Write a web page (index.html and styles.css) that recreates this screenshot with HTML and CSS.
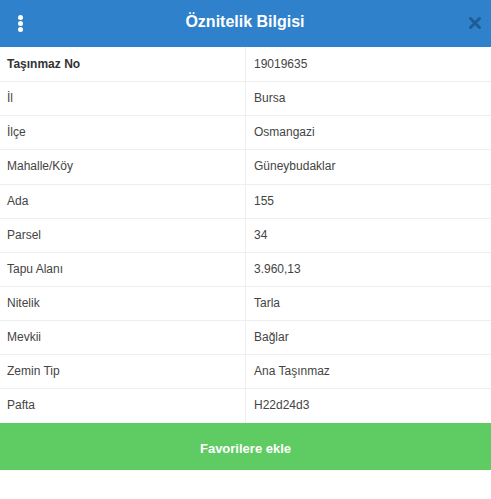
FILE: index.html
```html
<!DOCTYPE html>
<html lang="tr">
<head>
<meta charset="utf-8">
<title>Öznitelik Bilgisi</title>
<link rel="stylesheet" href="styles.css">
</head>
<body>
<div class="panel">
  <header class="panel-header">
    <span class="menu-icon"><i></i><i></i><i></i></span>
    <h1 class="panel-title">Öznitelik Bilgisi</h1>
    <svg class="close-icon" width="14" height="14" viewBox="0 0 14 14"><path d="M2.5 2.5 L11.5 11.5 M11.5 2.5 L2.5 11.5" stroke="#1f5c94" stroke-width="3" stroke-linecap="round"/></svg>
  </header>
  <table class="attr-table">
    <tbody>
      <tr><th>Taşınmaz No</th><td>19019635</td></tr>
      <tr><td>İl</td><td>Bursa</td></tr>
      <tr><td>İlçe</td><td>Osmangazi</td></tr>
      <tr><td>Mahalle/Köy</td><td>Güneybudaklar</td></tr>
      <tr><td>Ada</td><td>155</td></tr>
      <tr><td>Parsel</td><td>34</td></tr>
      <tr><td>Tapu Alanı</td><td>3.960,13</td></tr>
      <tr><td>Nitelik</td><td>Tarla</td></tr>
      <tr><td>Mevkii</td><td>Bağlar</td></tr>
      <tr><td>Zemin Tip</td><td>Ana Taşınmaz</td></tr>
      <tr><td>Pafta</td><td>H22d24d3</td></tr>
    </tbody>
  </table>
  <button class="fav-button">Favorilere ekle</button>
</div>
</body>
</html>
```
FILE: styles.css
```css
* { box-sizing: border-box; }
html, body { margin: 0; padding: 0; background: #fff; }
body { font-family: "Liberation Sans", Arial, sans-serif; color: #333; }

.panel { width: 491px; }

.panel-header {
  height: 47px;
  background: #3081cb;
  display: flex;
  align-items: center;
  justify-content: space-between;
  padding: 0 9px 0 18px;
}
.menu-icon {
  display: flex;
  flex-direction: column;
  gap: 1px;
  width: 6px;
  margin-top: -1px;
}
.menu-icon i {
  display: block;
  width: 5px;
  height: 5px;
  border-radius: 50%;
  background: #fff;
}
.panel-title {
  margin: 0;
  font-size: 16px;
  font-weight: bold;
  color: #fff;
  line-height: 20px;
  margin-left: -2px;
  margin-top: -4px;
}
.close-icon { display: block; margin-top: -1px; }

.attr-table {
  width: 100%;
  border-collapse: collapse;
  font-size: 12px;
  line-height: 1.42857143;
}
.attr-table th, .attr-table td {
  width: 50%;
  padding: 8px 7px;
  text-align: left;
  vertical-align: top;
  border-top: 1px solid #eeeeee;
  color: #444;
  font-weight: normal;
}
.attr-table tr:first-child th, .attr-table tr:first-child td { border-top: 0; padding-top: 9px; }
.attr-table th { font-weight: bold; color: #333; }
.attr-table tr > :last-child { border-left: 1px solid #eeeeee; padding-left: 8px; }

.fav-button {
  display: block;
  width: 100%;
  height: 47px;
  border: 0;
  margin: 0;
  background: #5fcb63;
  color: #fff;
  font-family: "Liberation Sans", Arial, sans-serif;
  font-size: 13px;
  font-weight: bold;
  text-align: center;
  padding: 4px 0 0;
}
```
